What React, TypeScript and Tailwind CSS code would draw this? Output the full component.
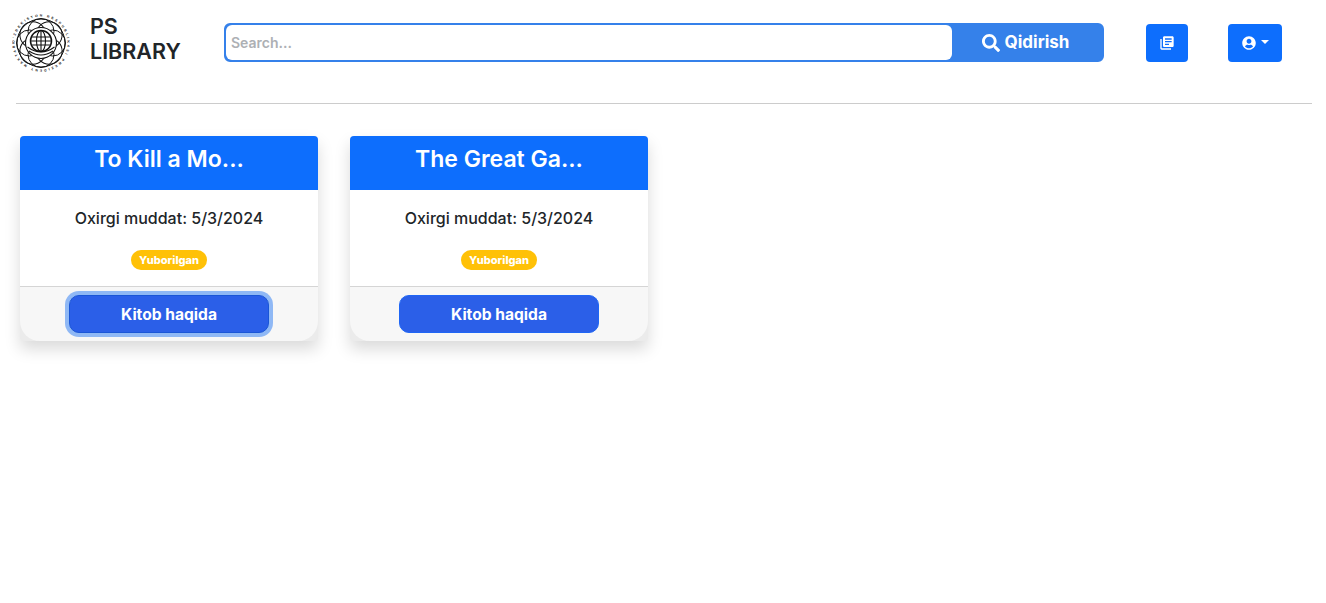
import { FaSearch, FaUserCircle } from 'react-icons/fa';
import { MdLibraryBooks } from 'react-icons/md';

function Logo() {
  const petals = [0, 45, 90, 135, 180, 225, 270, 315];
  return (
    <svg viewBox="0 0 58 58" className="h-[58px] w-[58px] shrink-0" fill="none" stroke="#111">
      <defs>
        <path id="ring" d="M29 29 m-26.4 0 a26.4 26.4 0 1 1 52.8 0 a26.4 26.4 0 1 1 -52.8 0" />
      </defs>
      <circle cx="29" cy="29" r="24" strokeWidth="1" />
      {petals.map((a) => (
        <circle key={a} cx="29" cy="17.5" r="13" strokeWidth="1" transform={`rotate(${a} 29 29)`} />
      ))}
      <circle cx="29" cy="29" r="15.5" fill="#fff" strokeWidth="1.1" />
      <path d="M15.5 33 q13.5 10 27 0 M17 37 q12 8 24 0" strokeWidth="1.1" />
      <circle cx="29" cy="27" r="10.5" fill="#fff" strokeWidth="1.5" />
      <ellipse cx="29" cy="27" rx="4.5" ry="10.5" strokeWidth="1.1" />
      <path d="M20 23h18M18.5 27h21M20 31h18M29 16.5v21" strokeWidth="1.1" />
      <text fontSize="3.4" fontWeight="700" fill="#111" stroke="none" fontFamily="'Liberation Sans', sans-serif">
        <textPath href="#ring" textLength="165">
          O'ZBEKISTON RESPUBLIKASI PREZIDENT MAKTABI
        </textPath>
      </text>
    </svg>
  );
}

function BookCard({ title, focused }: { title: string; focused?: boolean }) {
  return (
    <div className="w-[298px] rounded-[4px] bg-[#ebebeb] shadow-[0_8px_16px_rgba(0,0,0,0.15)]">
      <div className="flex h-[54px] items-center justify-center rounded-t-[4px] bg-[#0d6efd] pb-[8px] text-[23px] font-semibold text-white">
        {title}
      </div>
      <div className="flex h-[96px] flex-col items-center bg-white">
        <p className="mt-[16px] text-[16px] font-medium leading-[24px] text-[#212529]">
          Oxirgi muddat: 5/3/2024
        </p>
        <span className="mt-[20px] flex h-[20px] w-[76px] items-center justify-center rounded-full bg-[#ffc107] text-[11px] font-extrabold text-white">
          Yuborilgan
        </span>
      </div>
      <div className="flex h-[55px] justify-center rounded-b-[20px] border-t border-[#d5d5d5] bg-[#f7f7f7] pt-[8px]">
        <button
          className={
            focused
              ? 'h-[38px] w-[200px] rounded-[10px] border border-[#1a56d6] bg-[#2b5fe8] pt-[2px] text-[15.6px] font-bold text-white ring-4 ring-[#8fb8f5]'
              : 'h-[38px] w-[200px] rounded-[10px] border border-[#1f66f5] bg-[#2b5fe8] pt-[2px] text-[15.6px] font-bold text-white'
          }
        >
          Kitob haqida
        </button>
      </div>
    </div>
  );
}

export default function App() {
  return (
    <div className="min-h-[603px] bg-white font-['Inter','Noto_Sans',sans-serif]">
      <header className="flex h-[103px] items-start">
        <div className="ml-[12px] mt-[14px]">
          <Logo />
        </div>
        <div className="ml-[20px] mt-[14px] w-[110px] pr-[10px] text-[21.5px] font-semibold leading-[25px] text-[#212529]">
          PS LIBRARY
        </div>
        <div className="ml-[24px] mt-[23px] flex h-[39px] w-[880px] overflow-hidden rounded-[6px] border-2 border-[#3581ea] bg-[#3581ea]">
          <input
            placeholder="Search..."
            className="h-full w-[726px] rounded-[6px] bg-white pl-[5px] text-[14px] font-semibold outline-none placeholder:text-[#adb0b4]"
          />
          <div className="flex flex-1 items-center justify-center gap-[5px] pr-[3px] pt-[1px] text-[17px] font-bold text-white">
            <FaSearch className="h-[18px] w-[18px]" />
            Qidirish
          </div>
        </div>
        <button className="ml-[42px] mt-[24px] flex h-[38px] w-[42px] items-center justify-center rounded-[4px] bg-[#0d6efd] text-white">
          <MdLibraryBooks className="h-[16px] w-[16px]" />
        </button>
        <button className="ml-[40px] mt-[24px] flex h-[38px] w-[54px] items-center justify-center gap-[5px] rounded-[4px] bg-[#0d6efd] text-white">
          <FaUserCircle className="h-[14px] w-[14px]" />
          <span className="mb-[3px] h-0 w-0 border-x-[4px] border-t-[4px] border-x-transparent border-t-white" />
        </button>
      </header>
      <hr className="mx-[16px] w-[1296px] border-[#cccccc]" />
      <main className="ml-[20px] mt-[32px] flex gap-[32px]">
        <BookCard title="To Kill a Mo..." focused />
        <BookCard title="The Great Ga..." />
      </main>
    </div>
  );
}
